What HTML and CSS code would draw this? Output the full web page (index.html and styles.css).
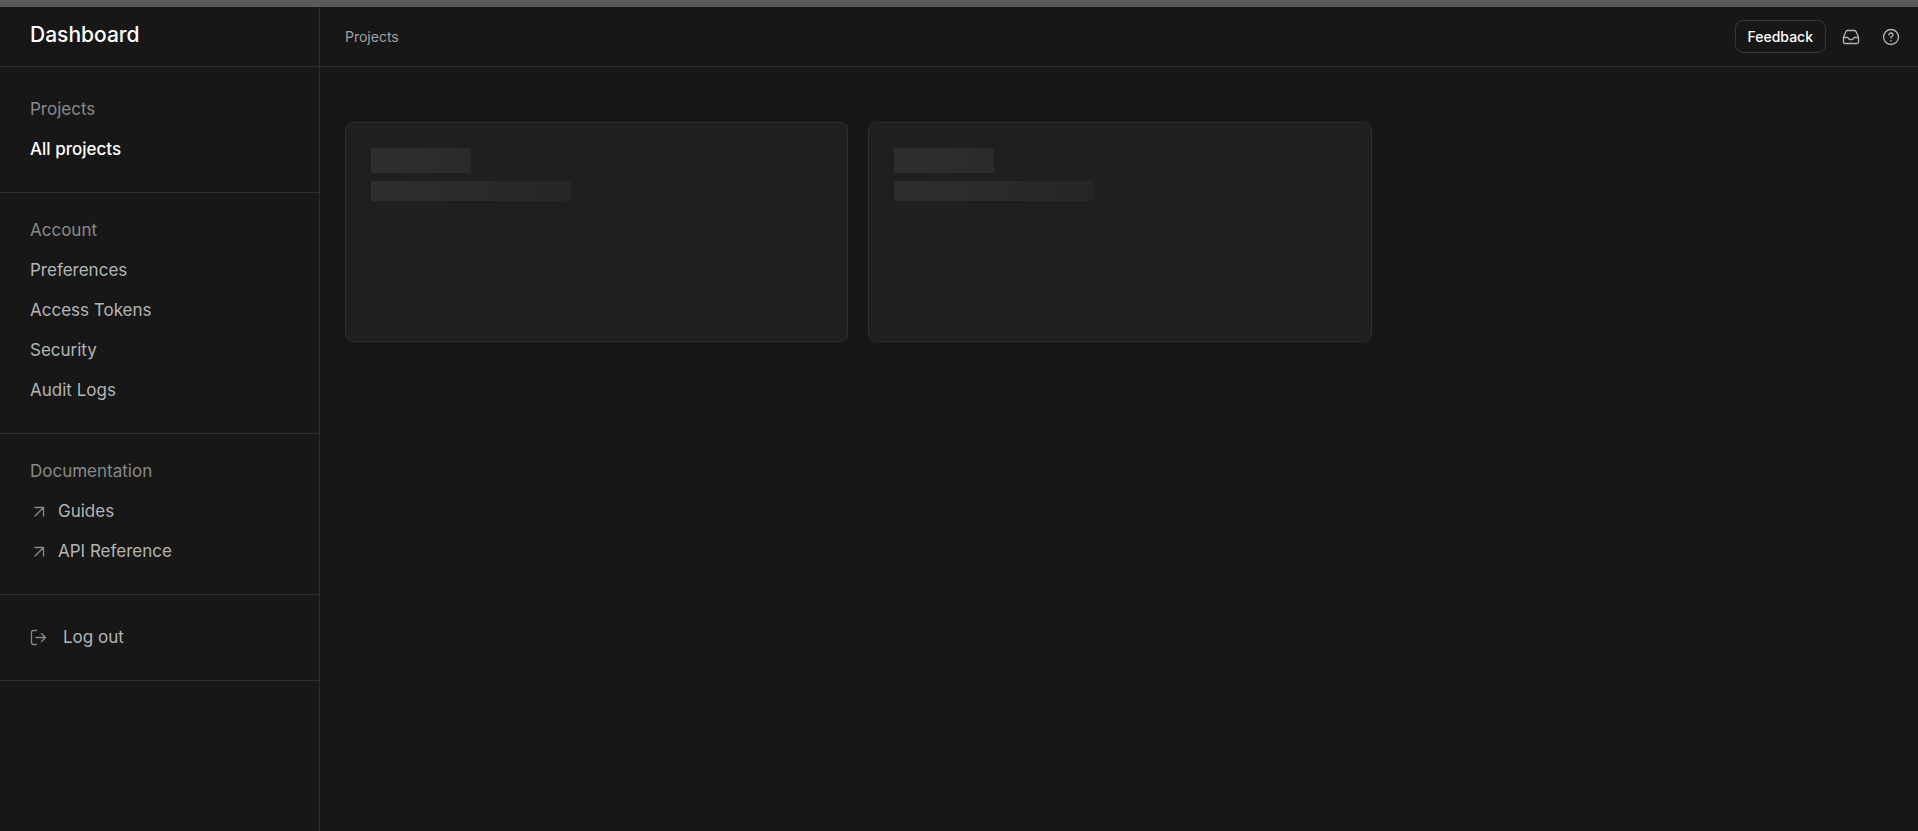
FILE: index.html
```html
<!DOCTYPE html>
<html lang="en">
  <head>
    <meta charset="utf-8" />
    <title>Dashboard</title>
    <link rel="stylesheet" href="styles.css">
  </head>
  <body>
    <div class="top-strip"></div>
    <div class="layout">
      <aside class="sidebar">
        <div class="sidebar-header"><h1>Dashboard</h1></div>
        <nav>
          <section class="menu-group first">
            <h2>Projects</h2>
            <a class="active" href="#">All projects</a>
          </section>
          <section class="menu-group">
            <h2>Account</h2>
            <a href="#">Preferences</a>
            <a href="#">Access Tokens</a>
            <a href="#">Security</a>
            <a href="#">Audit Logs</a>
          </section>
          <section class="menu-group">
            <h2>Documentation</h2>
            <a class="external" href="#">
              <svg viewBox="0 0 18 18"><path d="M5 5.500H13.500V14M13.500 5.500L5 14" /></svg>
              Guides
            </a>
            <a class="external" href="#">
              <svg viewBox="0 0 18 18"><path d="M5 5.500H13.500V14M13.500 5.500L5 14" /></svg>
              API Reference
            </a>
          </section>
          <section class="menu-group first">
            <button class="logout" type="button">
              <svg viewBox="0 0 18 18"><path d="M6.500 2.500H3.500Q1.500 2.500 1.500 4.500v10q0 2 2 2H6.500M6 9.500H15.500M11.500 5.500l4 4-4 4" /></svg>
              Log out
            </button>
          </section>
        </nav>
      </aside>
      <main class="main">
        <header class="main-header">
          <a class="breadcrumb" href="#">Projects</a>
          <div class="actions">
            <button class="feedback" type="button">Feedback</button>
            <button class="icon-button" type="button" aria-label="Inbox">
              <svg viewBox="0 0 18 18"><path d="M1.500 9L4 3.500Q4.500 2.500 5.500 2.500h7q1 0 1.500 1L16.500 9v5q0 1.500-1.500 1.500H3Q1.500 15.500 1.500 14zM1.500 9.500H6q.500 2 2 2h2q1.500 0 2-2h4.500" /></svg>
            </button>
            <button class="icon-button" type="button" aria-label="Help">
              <svg viewBox="0 0 18 18"><circle cx="9" cy="9" r="7.500" /><path d="M7 7q0-2 2-2t2 2Q11 8.200 9 9v1M9 12.500v.500" /></svg>
            </button>
          </div>
        </header>
        <div class="projects">
          <div class="card">
            <div class="skeleton skeleton-title"></div>
            <div class="skeleton skeleton-text"></div>
          </div>
          <div class="card">
            <div class="skeleton skeleton-title"></div>
            <div class="skeleton skeleton-text"></div>
          </div>
        </div>
      </main>
    </div>
  </body>
</html>
```
FILE: styles.css
```css
* {
  box-sizing: border-box;
  margin: 0;
  padding: 0;
}

body {
  display: flex;
  flex-direction: column;
  min-height: 100vh;
  background: #171717;
  color: #b4b4b4;
  font-family: Inter, "Liberation Sans", sans-serif;
  font-size: 17px;
}

a {
  color: inherit;
  text-decoration: none;
}

button {
  border: 0;
  background: none;
  color: inherit;
  font: inherit;
  cursor: pointer;
}

svg {
  flex: none;
  width: 18px;
  height: 18px;
  fill: none;
  stroke: #898989;
  stroke-width: 1.3;
  stroke-linecap: round;
  stroke-linejoin: round;
}

.top-strip {
  height: 7px;
  background: #5a5a5a;
}

.layout {
  display: flex;
  flex: 1;
}

/* sidebar */
.sidebar {
  width: 320px;
  border-right: 1px solid #2e2e2e;
}

.sidebar-header {
  display: flex;
  align-items: center;
  height: 60px;
  padding: 0 30px 4px;
  border-bottom: 1px solid #2e2e2e;
}

h1 {
  color: #fff;
  font-size: 21px;
  font-weight: 500;
}

.menu-group {
  padding: 17px 30px 23px;
  border-bottom: 1px solid #2e2e2e;
}

.menu-group.first {
  padding-top: 22px;
}

.menu-group h2,
.menu-group a,
.logout {
  display: flex;
  align-items: center;
  height: 40px;
  font-weight: 400;
}

.menu-group h2 {
  color: #898989;
  font-size: 17px;
}

.menu-group .active {
  color: #fff;
  font-weight: 500;
}

.menu-group .external {
  gap: 10px;
}

.logout {
  gap: 15px;
}

/* main area */
.main {
  flex: 1;
}

.main-header {
  display: flex;
  align-items: center;
  justify-content: space-between;
  height: 60px;
  padding: 0 12px 0 25px;
  border-bottom: 1px solid #2e2e2e;
}

.breadcrumb {
  color: #a0a0a0;
  font-size: 14px;
}

.actions {
  display: flex;
  align-items: center;
  gap: 10px;
}

.feedback {
  height: 33px;
  padding: 0 12px;
  border: 1px solid #363636;
  border-radius: 8px;
  color: #fff;
  font-size: 14px;
  font-weight: 500;
}

.icon-button {
  display: flex;
  align-items: center;
  justify-content: center;
  width: 30px;
  height: 30px;
}

.icon-button svg {
  stroke: #b4b4b4;
}

.projects {
  display: grid;
  grid-template-columns: repeat(3, 1fr);
  gap: 20px;
  padding: 55px 23px 55px 25px;
}

.card {
  height: 220px;
  padding: 25px;
  border: 1px solid #2e2e2e;
  border-radius: 8px;
  background: #1f1f1f;
}

.skeleton {
  background: linear-gradient(to right, #2e2e2e 25px, #232323 250px);
  background-size: 250px 100%;
}

.skeleton-title {
  width: 100px;
  height: 25px;
  margin-bottom: 8px;
}

.skeleton-text {
  width: 200px;
  height: 20px;
}
```
